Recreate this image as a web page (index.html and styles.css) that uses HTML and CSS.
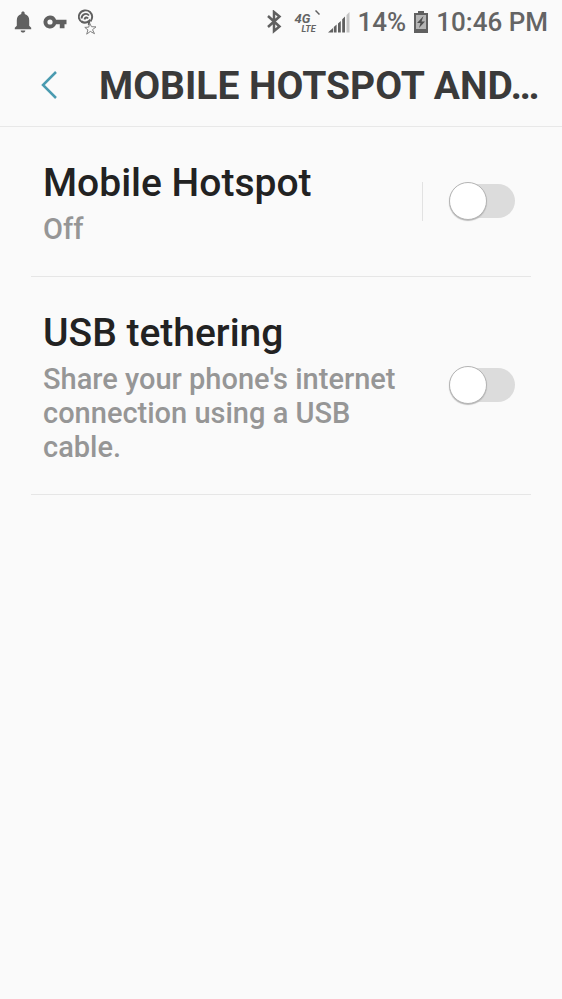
FILE: index.html
```html
<!DOCTYPE html>
<html lang="en">
<head>
<meta charset="utf-8">
<meta name="viewport" content="width=device-width, initial-scale=1">
<title>Mobile Hotspot</title>
<link rel="stylesheet" href="styles.css">
</head>
<body>
<div class="status">
  <div class="status-left">
    <svg width="18" height="22" viewBox="0 0 18 22" fill="#606060" aria-hidden="true"><path d="M9 .5c1 0 1.700.7 1.700 1.700v.7c3 .8 4.500 3.200 4.500 6.300v5.500l2 2v1.600H.8v-1.600l2-2V9.200c0-3.100 1.500-5.500 4.500-6.300v-.7C7.300 1.200 8 .5 9 .5zM6.700 19.400h4.600c0 1.300-1 2.100-2.300 2.100s-2.300-.8-2.300-2.100z"/></svg>
    <svg width="24" height="14" viewBox="0 0 24 14" fill="#606060" fill-rule="evenodd" aria-hidden="true"><path d="M7 .5a6.500 6.500 0 0 1 6.100 4.300H23.500v4.400H21.500v4h-4.700v-4h-3.700A6.500 6.500 0 1 1 7 .5zM7 4.400a2.500 2.500 0 1 0 0 5.200 2.500 2.500 0 0 0 0-5.200z"/></svg>
    <svg width="20" height="26" viewBox="0 0 20 26" fill="none" stroke="#606060" aria-hidden="true"><path d="M4 13C1 11.500 0 8 1.500 5 3.500 1 9 .3 12 3c3 3 2.500 6.500.5 9.500M3.500 9.500C4 5 8.500 3.500 11 6.500M6.500 10.500c.3-2.200 2.500-2.700 3.500-1" stroke-width="1.900"/><path d="M3.500 12.500c2.500 1.700 5 1.500 7.500-.5v4" stroke-width="2.200"/><path d="M11.500 14l2 3.700 4.500.2-3.500 2.800 2 4-4.200-2.300-3.600 2.800 1.200-4.300-3.100-2.500 4-.3z" fill="#fafafa" stroke="#808080" stroke-width="1"/></svg>
  </div>
  <div class="status-right">
    <svg class="bt" width="16" height="24" viewBox="0 0 16 24" fill="none" stroke="#606060" stroke-width="2.500" aria-hidden="true"><path d="M2 6l11.500 10.500L8 21V2l5.500 4.500L2 17"/></svg>
    <div class="network"><span class="gen">4G</span><span class="lte">LTE</span>
      <svg class="tick" width="5" height="5" viewBox="0 0 5 5" aria-hidden="true"><path d="M.5.5l4 4" stroke="#606060" stroke-width="1.500"/></svg>
    </div>
    <svg class="signal" width="22" height="22" viewBox="0 0 22 22" fill="#606060" aria-hidden="true"><path d="M0 21.500l5-4.500v4.500zM5.800 16l2.800-2.500v8H5.800zM10 12.500l2.800-2.500v11.500H10zM14.200 8.200L17 5.500v16h-2.800z"/><path d="M18.500 4L21.500 1v20.500h-3z" fill="#c4c4c4"/></svg>
    <span>14%</span>
    <svg width="14" height="22" viewBox="0 0 14 22" aria-hidden="true"><path d="M4 0h6v2h4v20H0V2h4z" fill="#606060"/><path d="M2 4h10v14H2z" fill="#b5b5b5"/><path d="M9.500 5L3 12h3.500l-1.500 5L11 10.500H7.500z" fill="#505050"/></svg>
    <span>10:46 PM</span>
  </div>
</div>
<header class="bar">
  <button class="back" type="button" aria-label="Back"><svg width="18" height="30" viewBox="0 0 18 30" fill="none" stroke="#4a9bb0" stroke-width="2.500" aria-hidden="true"><path d="M15 1L2 14l13 13"/></svg></button>
  <h1>MOBILE HOTSPOT AND…</h1>
</header>
<main class="list">
  <section class="row">
    <label class="text" for="hotspot"><span class="name">Mobile Hotspot</span><span class="desc">Off</span></label>
    <span class="split"></span>
    <input class="switch" id="hotspot" type="checkbox" role="switch">
  </section>
  <section class="row">
    <label class="text" for="usb"><span class="name">USB tethering</span><span class="desc">Share your phone's internet connection using a USB cable.</span></label>
    <input class="switch" id="usb" type="checkbox" role="switch">
  </section>
</main>
</body>
</html>
```
FILE: styles.css
```css
*, *::before, *::after { box-sizing: border-box; }
body {
  margin: 0;
  min-height: 100vh;
  background: #fafafa;
  font-family: Roboto, "Liberation Sans", sans-serif;
  font-weight: 500;
}
svg { display: block; flex: none; }
.status {
  display: flex;
  justify-content: space-between;
  height: 44px;
  padding: 0 14px;
  color: #646464;
  font-size: 26px;
  line-height: 44px;
}
.status-left, .status-right { display: flex; align-items: center; }
.status-left { gap: 11px; }
.status-right { gap: 8px; white-space: nowrap; }
.bt { margin-right: 5px; }
.network {
  position: relative;
  display: flex;
  flex-direction: column;
  width: 25px;
  padding-top: 4px;
  font-style: italic;
  font-weight: 700;
}
.gen { font-size: 13px; line-height: 10px; }
.lte { padding-left: 7px; font-size: 9px; line-height: 10px; }
.tick { position: absolute; top: 0; right: 0; }
.bar {
  display: flex;
  align-items: center;
  height: 83px;
  padding-top: 1px;
  border-bottom: 1px solid #e8e8e8;
}
.back {
  display: flex;
  justify-content: center;
  width: 99px;
  padding: 0;
  border: 0;
  background: none;
}
h1 {
  margin: 0;
  color: #3a3a3a;
  font-size: 39px;
  font-weight: 700;
  line-height: 46px;
  white-space: nowrap;
}
.list { padding: 0 31px; }
.row {
  display: flex;
  align-items: center;
  padding: 29px 16px 30px 12px;
  border-bottom: 1px solid #e6e6e6;
}
.text { flex: 1; }
.name, .desc { display: block; }
.name { margin-bottom: 2px; color: #222; font-size: 39px; line-height: 54px; }
.desc { color: #969696; font-size: 29px; line-height: 34px; }
.split { width: 1px; height: 39px; background: #e2e2e2; }
.switch {
  appearance: none;
  position: relative;
  flex: none;
  width: 66px;
  height: 38px;
  margin: 0 0 0 26px;
}
.switch::before {
  content: "";
  position: absolute;
  inset: 2px 0 2px 2px;
  border-radius: 18px;
  background: #dcdcdc;
}
.switch::after {
  content: "";
  position: absolute;
  top: 0;
  left: 0;
  width: 38px;
  height: 38px;
  border: 1px solid #b4b4b4;
  border-radius: 50%;
  background: #fff;
  box-shadow: 0 1px 1px #bbb;
}
.switch:checked::after { left: 28px; }
```
